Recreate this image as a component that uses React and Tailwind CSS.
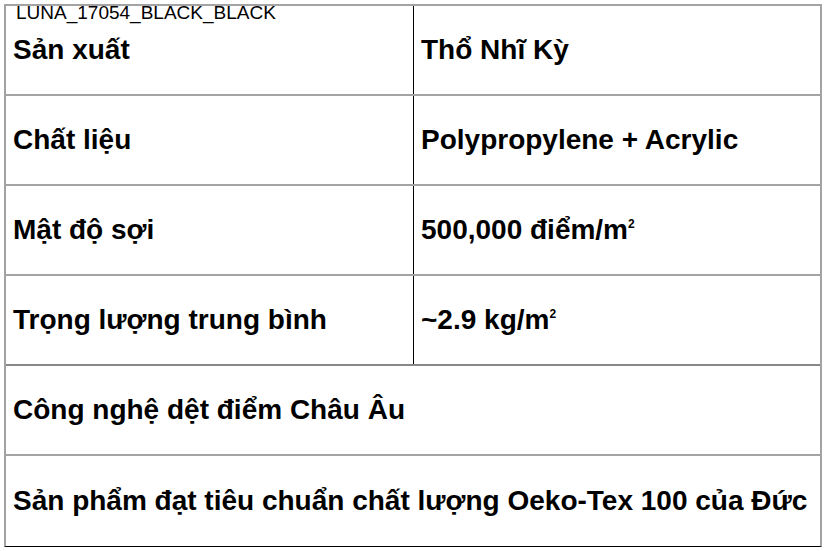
import React from 'react';

const rows = [
  { label: 'Sản xuất', value: 'Thổ Nhĩ Kỳ' },
  { label: 'Chất liệu', value: 'Polypropylene + Acrylic' },
  { label: 'Mật độ sợi', value: <>500,000 điểm/m<sup className="text-[12px] relative -top-[6px]">2</sup></> },
  { label: 'Trọng lượng trung bình', value: <>~2.9 kg/m<sup className="text-[12px] relative -top-[6px]">2</sup></> },
  { label: 'Công nghệ dệt điểm Châu Âu' },
  { label: 'Sản phẩm đạt tiêu chuẩn chất lượng Oeko-Tex 100 của Đức' },
];

export default function App() {
  return (
    <div className="relative w-[827px] h-[551px] bg-white text-black font-['Liberation_Sans',Arial,sans-serif]">
      <div className="pt-[4px] pl-[4px]">
        <div className="w-[818px] border-t-2 border-l-2 border-r-2 border-[#a3a3a3] border-b border-b-black">
          {rows.map((r, i) => (
            <div
              key={i}
              className={`flex h-[90px] ${i < rows.length - 1 ? (i === 3 ? 'border-b-2 border-[#888888]' : 'border-b-2 border-[#a3a3a3]') : ''}`}
            >
              {r.value ? (
                <>
                  <div className="w-[408px] flex items-center pl-[7px] border-r border-black text-[28px] font-bold">
                    {r.label}
                  </div>
                  <div className="flex-1 flex items-center pl-[7px] text-[28px] font-bold">{r.value}</div>
                </>
              ) : (
                <div className="flex-1 flex items-center pl-[7px] text-[28px] font-bold">{r.label}</div>
              )}
            </div>
          ))}
        </div>
      </div>
      <div className="absolute left-[16px] top-[2px] text-[19px] leading-[22px]">LUNA_17054_BLACK_BLACK</div>
    </div>
  );
}
